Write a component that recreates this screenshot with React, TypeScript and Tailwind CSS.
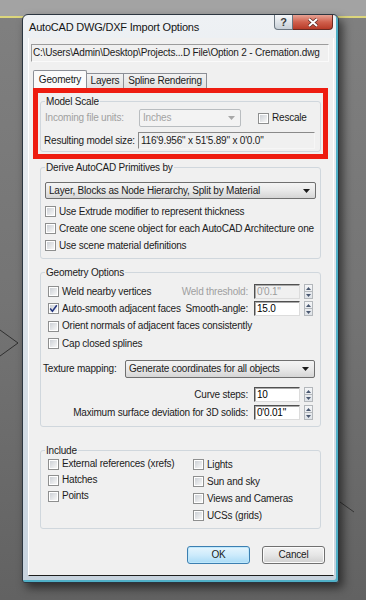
import React from "react";

// small win7-ish widgets

const Check = ({ checked = false }: { checked?: boolean }) => (
  <span className="flex h-[11px] w-[11px] shrink-0 items-center justify-center border border-[#8e8f8f] bg-white p-[1px]">
    <span className="relative flex h-full w-full items-center justify-center bg-gradient-to-br from-[#cdd1d6] to-[#f7f7f7]">
      {checked && (
        <svg viewBox="0 0 9 9" className="absolute h-[9px] w-[9px]">
          <path d="M1.2 4.6 L3.4 7.2 L7.8 1.2" fill="none" stroke="#23347e" strokeWidth="1.5" />
        </svg>
      )}
    </span>
  </span>
);

const CheckRow = ({ label, checked, className = "" }: { label: string; checked?: boolean; className?: string }) => (
  <div className={"flex items-center gap-[3px] " + className}>
    <Check checked={checked} />
    <span>{label}</span>
  </div>
);

const Arrow = ({ color = "#1a1a1a" }: { color?: string }) => (
  <svg viewBox="0 0 7 4" className="h-[4px] w-[7px]">
    <path d="M0 0 L7 0 L3.5 4 Z" fill={color} />
  </svg>
);

const Combo = ({ text, className = "", disabled = false }: { text: string; className?: string; disabled?: boolean }) => (
  <div
    className={
      "flex shrink-0 items-center justify-between rounded-[2px] border pl-[3px] pr-[5px] " +
      (disabled
        ? "border-[#b9bdc0] bg-[#f3f3f3] text-[#a3a3a3] "
        : "border-[#6f6f6f] bg-gradient-to-b from-[#f4f4f4] via-[#e9e9e9] to-[#d5d5d5] ") +
      className
    }
  >
    <span>{text}</span>
    <Arrow color={disabled ? "#a8a8a8" : "#1a1a1a"} />
  </div>
);

const Field = ({ value, disabled = false }: { value: string; disabled?: boolean }) => (
  <span
    className={
      "flex h-[15px] w-[46px] shrink-0 items-center border border-t-[#505050] border-l-[#505050] border-r-[#dcdcdc] border-b-[#dcdcdc] pl-[2px] shadow-[inset_1px_1px_0_#a9a9a9] " +
      (disabled ? "bg-[#f0f0f0] text-[#9c9c9c]" : "bg-white text-black")
    }
  >
    {value}
  </span>
);

const Spinner = () => (
  <span className="flex h-[15px] w-[9px] shrink-0 flex-col border border-[#b3b7bb] bg-gradient-to-b from-[#f4f5f7] to-[#dfe3e8]">
    <span className="flex flex-1 items-center justify-center border-b border-[#b3b7bb]">
      <svg viewBox="0 0 5 3" className="h-[3px] w-[5px]">
        <path d="M2.5 0 L5 3 L0 3 Z" fill="#4a5870" />
      </svg>
    </span>
    <span className="flex flex-1 items-center justify-center">
      <svg viewBox="0 0 5 3" className="h-[3px] w-[5px]">
        <path d="M0 0 L5 0 L2.5 3 Z" fill="#4a5870" />
      </svg>
    </span>
  </span>
);

const NumRow = ({ label, value, disabled = false, labelClass = "" }: { label: string; value: string; disabled?: boolean; labelClass?: string }) => (
  <div className="flex items-center gap-[6px]">
    <span className={disabled ? "text-[#9f9f9f]" : labelClass}>{label}</span>
    <div className="flex items-center gap-[4px]">
      <Field value={value} disabled={disabled} />
      <Spinner />
    </div>
  </div>
);

const Group = ({ title, className = "", children }: { title: string; className?: string; children: React.ReactNode }) => (
  <fieldset className={"w-[281px] rounded-[3px] border border-[#d0d7dd] " + className}>
    <legend className="ml-[4px] px-[1px] leading-[11px]">{title}</legend>
    {children}
  </fieldset>
);

const App = () => {
  return (
    <div className="relative h-[600px] w-[366px] overflow-hidden bg-gradient-to-b from-[#808080] via-[#747474] to-[#626262] font-['Liberation_Sans',Arial,sans-serif] text-[10px] leading-[12px] tracking-[-0.2px] text-[#1b1b1b]">
      <div className="h-[16px] bg-[#a3a3a3]" />
      <div className="h-[2px] bg-[#dcd67c]" />

      {/* wireframe bits on the desktop */}
      <svg className="absolute left-0 top-[320px]" width="24" height="44">
        <path d="M0 10 L18 23 L0 36" fill="none" stroke="#1f1f1f" strokeWidth="0.8" />
      </svg>
      <svg className="absolute left-[338px] top-[500px]" width="20" height="16">
        <path d="M2 2 L16 12" fill="none" stroke="#2a2a2a" strokeWidth="0.8" />
      </svg>

      {/* the dialog window */}
      <div className="absolute left-[22px] top-[14px] flex h-[569px] w-[317px] flex-col rounded-t-[6px] rounded-b-[3px] border border-[#2c3640] bg-gradient-to-b from-[#eef1f4] via-[#dde4ea] to-[#c7d3de] pb-[6px] pl-[5px] pr-[4px] shadow-[inset_-2px_-2px_0_#4fb0c7,4px_5px_10px_rgba(0,0,0,0.55)]">
        {/* title bar */}
        <div className="flex h-[23px] items-start justify-between">
          <span className="mt-[6px] pl-[1px] text-[11px] leading-[13px] text-[#151515]">AutoCAD DWG/DXF Import Options</span>
          <div className="mr-[1px] flex">
            <div className="flex h-[15px] w-[19px] items-center justify-center rounded-bl-[4px] border border-t-0 border-[#6b7680] bg-gradient-to-b from-[#f5f7f9] to-[#c8d0d8] text-[11px] font-bold leading-none text-[#3a3a3a]">
              ?
            </div>
            <div className="flex h-[15px] w-[40px] items-center justify-center rounded-br-[4px] border border-l-0 border-t-0 border-[#6a2a22] bg-gradient-to-b from-[#e6a294] via-[#d0604d] to-[#b83a27]">
              <svg viewBox="0 0 12 9" className="h-[9px] w-[12px]">
                <path d="M2 1 L10 8 M10 1 L2 8" stroke="#5a2a24" strokeWidth="3.4" />
                <path d="M2 1 L10 8 M10 1 L2 8" stroke="#ffffff" strokeWidth="2" />
              </svg>
            </div>
          </div>
        </div>

        {/* client area */}
        <div className="flex flex-1 flex-col border-x border-b border-x-white border-b-[#1e1e1e] bg-[#f0f0f0]">
          <div className="ml-[2px] mt-[6px] flex h-[18px] w-[298px] items-center border border-t-[#9c9c9c] border-l-[#9c9c9c] border-r-[#fafafa] border-b-[#fafafa] pl-[1px]">
            C:\Users\Admin\Desktop\Projects...D File\Option 2 - Cremation.dwg
          </div>

          {/* tabs */}
          <div className="ml-[4px] mt-[8px] flex h-[18px] items-end">
            <div className="flex h-[18px] w-[54px] items-center justify-center rounded-t-[2px] border border-b-0 border-[#8c8f96] bg-[#fbfbfb] pt-[1px]">
              Geometry
            </div>
            <div className="flex h-[15px] w-[37px] items-center justify-center border-r border-t border-[#8c8f96] bg-gradient-to-b from-[#f2f2f2] to-[#e1e1e1]">
              Layers
            </div>
            <div className="flex h-[15px] w-[83px] items-center justify-center border-r border-t border-[#8c8f96] bg-gradient-to-b from-[#f2f2f2] to-[#e1e1e1]">
              Spline Rendering
            </div>
          </div>

          {/* tab panel */}
          <div className="ml-[4px] flex w-[296px] flex-col">
            <div className="h-[71px] w-[295px] border-[5px] border-[#ee1c10]">
              <Group title="Model Scale" className="ml-[2px] mt-[3px] pb-[2px]">
                <div className="mt-[2px] flex h-[18px] items-center pl-[4px]">
                  <span className="w-[94px] shrink-0 text-[#a0a0a0]">Incoming file units:</span>
                  <Combo text="Inches" disabled className="h-[18px] w-[102px]" />
                  <CheckRow label="Rescale" className="ml-[17px]" />
                </div>
                <div className="mt-[5px] flex h-[17px] items-center pl-[3px]">
                  <span className="w-[94px] shrink-0">Resulting model size:</span>
                  <span className="flex h-[17px] w-[177px] items-center border border-t-[#8a8a8a] border-l-[#8a8a8a] border-r-[#f6f6f6] border-b-[#f6f6f6] pl-[2px]">
                    116'9.956" x 51'5.89" x 0'0.0"
                  </span>
                </div>
              </Group>
            </div>

            <Group title="Derive AutoCAD Primitives by" className="ml-[7px] mt-[3px] pb-[4px]">
              <Combo text="Layer, Blocks as Node Hierarchy, Split by Material" className="ml-[4px] mt-[9px] h-[17px] w-[271px]" />
              <div className="mt-[4px] flex flex-col pl-[4px]">
                <CheckRow label="Use Extrude modifier to represent thickness" className="h-[17px]" />
                <CheckRow label="Create one scene object for each AutoCAD Architecture one" className="h-[17px]" />
                <CheckRow label="Use scene material definitions" className="h-[17px]" />
              </div>
            </Group>

            <Group title="Geometry Options" className="ml-[7px] mt-[8px] pb-[5px]">
              <div className="mt-[5px] flex flex-col pl-[7px]">
                <div className="flex h-[17px] items-center justify-between pr-[7px]">
                  <CheckRow label="Weld nearby vertices" />
                  <NumRow label="Weld threshold:" value={'0\'0.1"'} disabled />
                </div>
                <div className="flex h-[17px] items-center justify-between pr-[7px]">
                  <CheckRow label="Auto-smooth adjacent faces" checked />
                  <NumRow label="Smooth-angle:" value="15.0" />
                </div>
                <CheckRow label="Orient normals of adjacent faces consistently" className="h-[18px]" />
                <CheckRow label="Cap closed splines" className="h-[17px]" />
              </div>
              <div className="mt-[8px] flex h-[18px] items-center pl-[2px]">
                <span className="w-[82px] shrink-0">Texture mapping:</span>
                <Combo text="Generate coordinates for all objects" className="h-[18px] w-[190px]" />
              </div>
              <div className="mt-[8px] flex flex-col items-end gap-[1px] pr-[7px]">
                <div className="flex h-[17px] items-center">
                  <NumRow label="Curve steps:" value="10" />
                </div>
                <div className="flex h-[17px] items-center">
                  <NumRow label="Maximum surface deviation for 3D solids:" value={'0\'0.01"'} />
                </div>
              </div>
            </Group>

            <Group title="Include" className="ml-[7px] mt-[18px] pb-[4px]">
              <div className="flex pl-[7px]">
                <div className="flex w-[145px] flex-col">
                  <CheckRow label="External references (xrefs)" className="h-[16px]" />
                  <CheckRow label="Hatches" className="h-[16px]" />
                  <CheckRow label="Points" className="h-[16px]" />
                </div>
                <div className="flex flex-col">
                  <CheckRow label="Lights" className="h-[17px]" />
                  <CheckRow label="Sun and sky" className="h-[17px]" />
                  <CheckRow label="Views and Cameras" className="h-[17px]" />
                  <CheckRow label="UCSs (grids)" className="h-[17px]" />
                </div>
              </div>
            </Group>
          </div>

          {/* buttons */}
          <div className="mt-[17px] flex justify-end gap-[12px] pr-[8px]">
            <button className="flex h-[18px] w-[63px] items-center justify-center rounded-[3px] border border-[#3c7fb1] bg-gradient-to-b from-[#e6f5fd] via-[#cdebfc] to-[#a9dbf6] shadow-[inset_0_0_0_1px_#bfe8fc]">
              OK
            </button>
            <button className="flex h-[18px] w-[63px] items-center justify-center rounded-[3px] border border-[#707070] bg-gradient-to-b from-[#f3f3f3] via-[#e6e6e6] to-[#d0d0d0] shadow-[inset_0_0_0_1px_#fbfbfb]">
              Cancel
            </button>
          </div>
        </div>
      </div>
    </div>
  );
};

export default App;
